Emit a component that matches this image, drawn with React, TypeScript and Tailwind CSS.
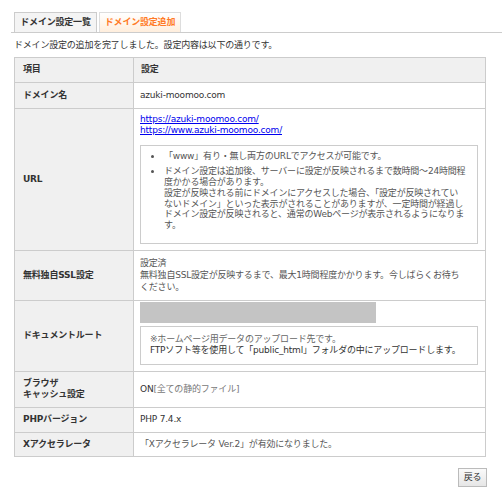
import React from "react";

const font = { fontFamily: '"DejaVu Sans", "Noto Sans CJK JP", sans-serif' };

type Row = {
  label: React.ReactNode;
  h: string;
  body: React.ReactNode;
};

const Note = ({ children, className }: { children: React.ReactNode; className?: string }) => (
  <div className={`border border-[#cccccc] ${className ?? ""}`}>{children}</div>
);

const Dot = () => (
  <span className="w-[13px] shrink-0 flex pt-[4px]">
    <span className="w-[3px] h-[3px] rounded-full bg-[#555555]" />
  </span>
);

const rows: Row[] = [
  {
    label: "ドメイン名",
    h: "h-[25.5px]",
    body: <span>azuki-moomoo.com</span>,
  },
  {
    label: "URL",
    h: "h-[141.5px]",
    body: (
      <div className="pt-[5px] pb-[6px] pr-[7px]">
        <div className="leading-[11px]">
          <a href="#" className="text-[#0000ee] underline block">https://azuki-moomoo.com/</a>
          <a href="#" className="text-[#0000ee] underline block">https://www.azuki-moomoo.com/</a>
        </div>
        <Note className="mt-[9px] pt-[5px] pb-[12px] pl-[10px] text-[#555555]">
          <ul className="leading-[10.8px]">
            <li className="flex">
              <Dot />
              <span className="whitespace-nowrap">「www」有り・無し両方のURLでアクセスが可能です。</span>
            </li>
            <li className="flex mt-[5px]">
              <Dot />
              <span className="whitespace-nowrap">
                ドメイン設定は追加後、サーバーに設定が反映されるまで数時間～24時間程
                <br />
                度かかる場合があります。
                <br />
                設定が反映される前にドメインにアクセスした場合、「設定が反映されてい
                <br />
                ないドメイン」といった表示がされることがありますが、一定時間が経過し
                <br />
                ドメイン設定が反映されると、通常のWebページが表示されるようになりま
                <br />
                す。
              </span>
            </li>
          </ul>
        </Note>
      </div>
    ),
  },
  {
    label: "無料独自SSL設定",
    h: "h-[49.5px]",
    body: (
      <div className="leading-[12.3px] text-[#555555] whitespace-nowrap">
        設定済
        <br />
        無料独自SSL設定が反映するまで、最大1時間程度かかります。今しばらくお待ち
        <br />
        ください。
      </div>
    ),
  },
  {
    label: "ドキュメントルート",
    h: "h-[69.5px]",
    body: (
      <div className="pt-[1px] pb-[6px] pr-[7px]">
        <div className="w-[236px] h-[21px] bg-[#c4c4c4]" />
        <Note className="mt-[3px] pt-[7px] pb-[8px] pl-[9px] leading-[11px] whitespace-nowrap">
          <span className="text-[#666666]">※ホームページ用データのアップロード先です。</span>
          <br />
          FTPソフト等を使用して「public_html」フォルダの中にアップロードします。
        </Note>
      </div>
    ),
  },
  {
    label: (
      <span className="block leading-[11px]">
        ブラウザ
        <br />
        キャッシュ設定
      </span>
    ),
    h: "h-[36.5px]",
    body: (
      <span>
        ON<span className="text-[#777777]">[全ての静的ファイル]</span>
      </span>
    ),
  },
  {
    label: "PHPバージョン",
    h: "h-[24.5px]",
    body: <span>PHP 7.4.x</span>,
  },
  {
    label: "Xアクセラレータ",
    h: "h-[24.5px]",
    body: <span className="text-[#555555]">「Xアクセラレータ Ver.2」が有効になりました。</span>,
  },
];

export default function App() {
  return (
    <div className="w-[502px] h-[501px] bg-white text-[9px] tracking-[-0.2px] text-[#333333]" style={font}>
      <div className="pt-[12px] pl-[11px]">
        {/* タブ */}
        <div className="flex gap-[2px] pl-[3px] border-b border-[#cccccc]">
          <div className="w-[83px] h-[20px] flex items-center justify-center font-bold bg-[#f4f4f4] border border-b-0 border-[#cccccc]">
            ドメイン設定一覧
          </div>
          <div className="w-[82px] h-[20px] flex items-center justify-center font-bold text-[#ff7a26] bg-gradient-to-b from-white to-[#ffeedd] border border-b-0 border-[#dddddd]">
            ドメイン設定追加
          </div>
        </div>
      </div>

      <div className="px-[14px]">
        <p className="mt-[7px] leading-[11px]">ドメイン設定の追加を完了しました。設定内容は以下の通りです。</p>

        <table className="mt-[6px] w-[472px] border-collapse">
          <tbody>
            <tr className="h-[25px] bg-[#f0f0f0]">
              <th className="w-[119px] border border-[#cccccc] text-left font-bold pl-[8px]">項目</th>
              <th className="border border-[#cccccc] text-left font-bold pl-[7px]">設定</th>
            </tr>
            {rows.map((r, i) => (
              <tr key={i} className={r.h}>
                <td className="w-[119px] border border-[#cccccc] bg-[#f0f0f0] font-bold pl-[8px] align-middle">
                  {r.label}
                </td>
                <td className="border border-[#cccccc] pl-[6px] align-middle">{r.body}</td>
              </tr>
            ))}
          </tbody>
        </table>

        <div className="flex justify-end mt-[11px] pr-[1px]">
          <button className="w-[29px] h-[19px] border border-[#bbbbbb] bg-gradient-to-b from-[#fafafa] to-[#e6e6e6] text-[#333333]">
            戻る
          </button>
        </div>
      </div>
    </div>
  );
}
